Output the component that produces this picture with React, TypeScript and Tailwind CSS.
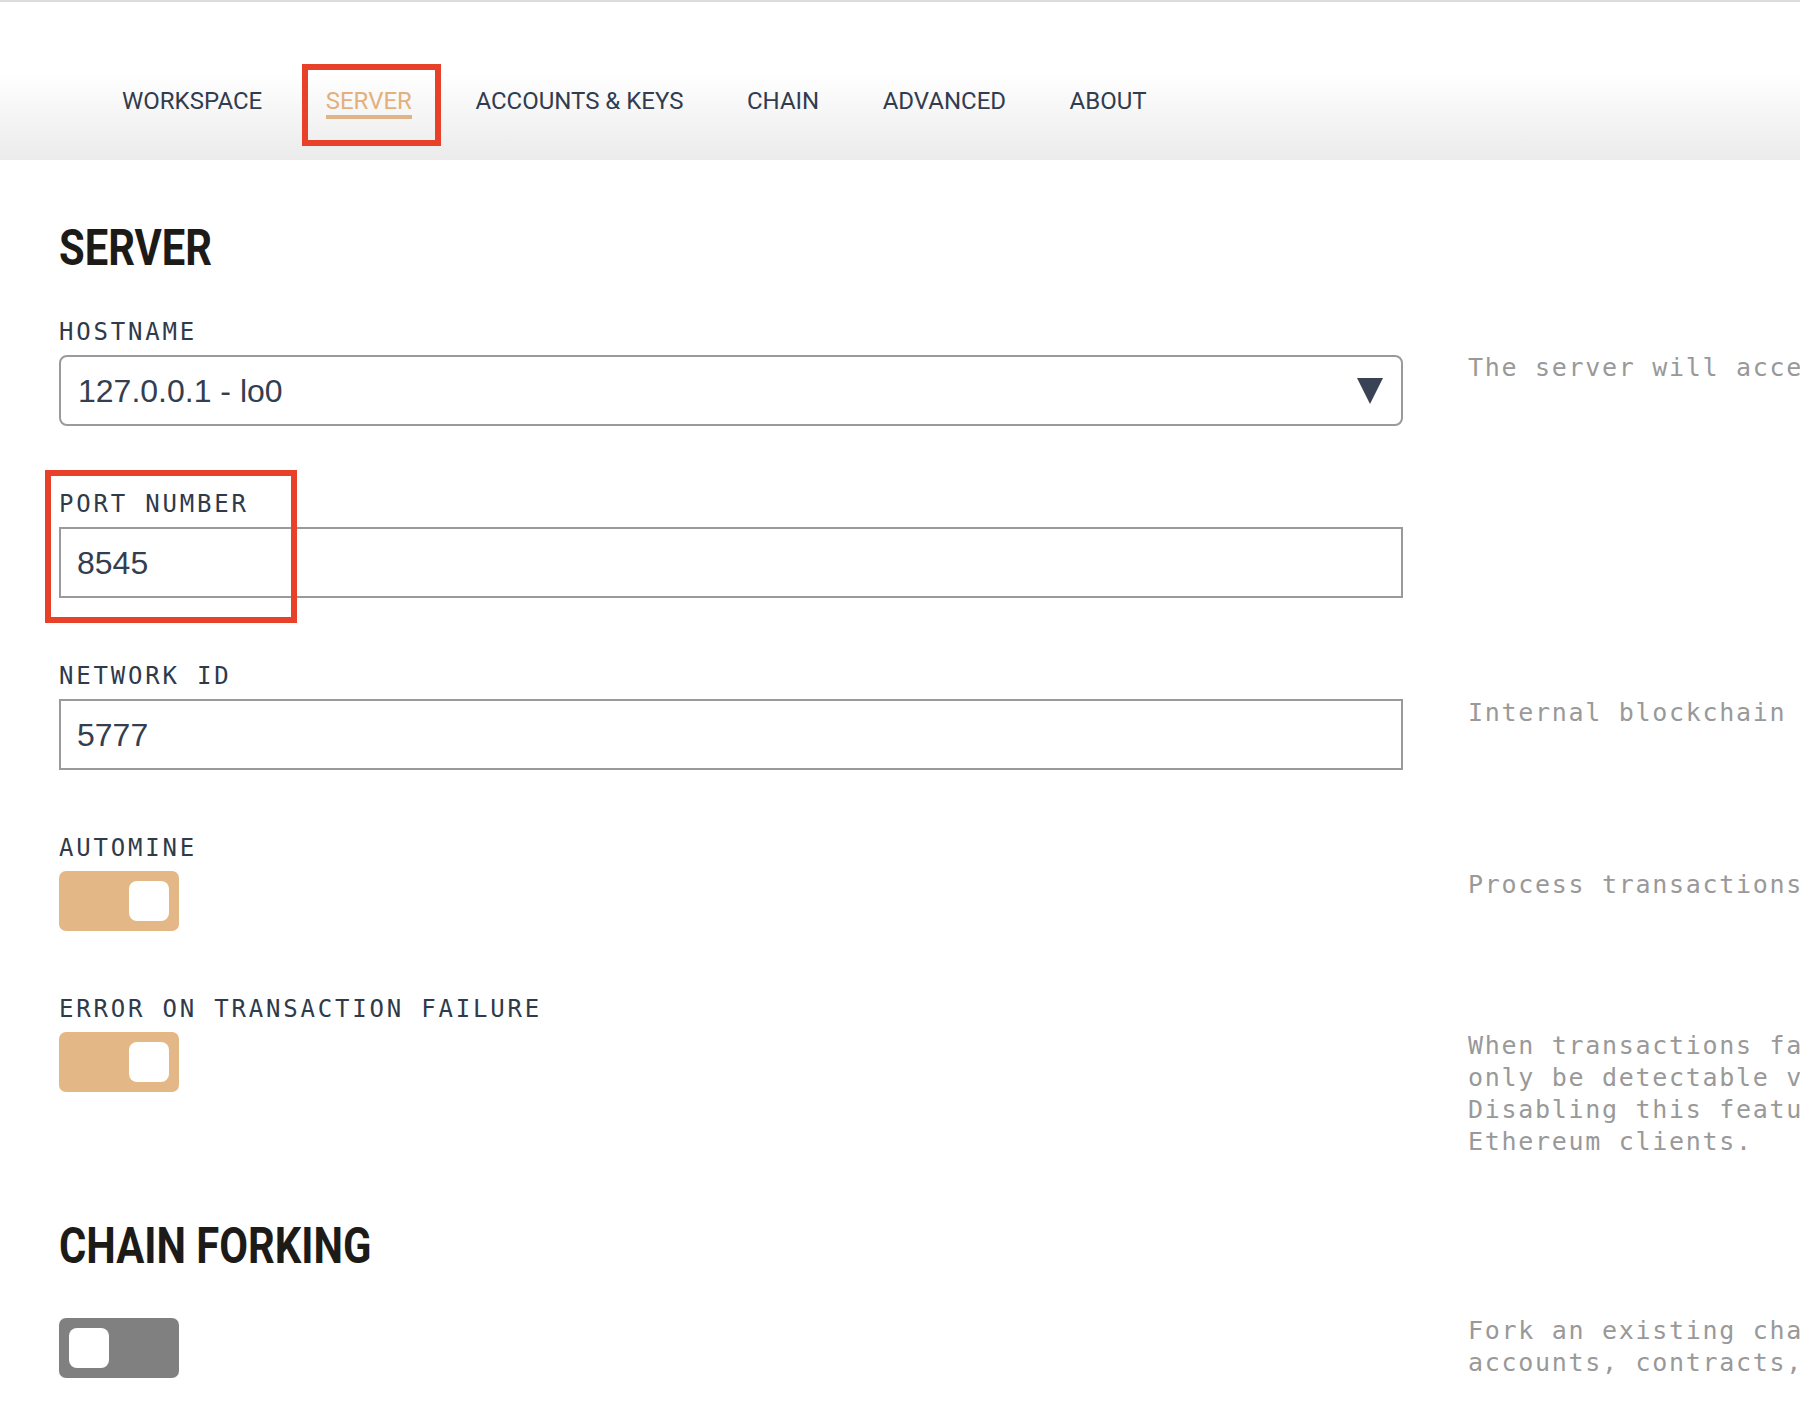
import React from 'react';

const tabs = ['WORKSPACE', 'SERVER', 'ACCOUNTS & KEYS', 'CHAIN', 'ADVANCED', 'ABOUT'];

const Toggle = ({ on }: { on: boolean }) => (
  <div
    className={
      on
        ? 'w-[120px] h-[60px] rounded-[7px] bg-[#e3b786] p-[10px] flex justify-end'
        : 'w-[120px] h-[60px] rounded-[7px] bg-[#808080] p-[10px] flex justify-start'
    }
  >
    <div className="w-[40px] h-[40px] rounded-[8px] bg-white" />
  </div>
);

const Label = ({ children }: { children: React.ReactNode }) => (
  <div className="font-['DejaVu_Sans_Mono',monospace] text-[24px] leading-[28px] tracking-[2.8px] text-[#2f3a4b] whitespace-nowrap">
    {children}
  </div>
);

const Desc = ({ lines, className }: { lines: string[]; className?: string }) => (
  <div className={'font-[\'DejaVu_Sans_Mono\',monospace] text-[25px] leading-[32px] tracking-[1.7px] text-[#999999] whitespace-nowrap ' + (className ?? '')}>
    {lines.map((l) => (
      <div key={l}>{l}</div>
    ))}
  </div>
);

const Heading = ({ children }: { children: React.ReactNode }) => (
  <h2 className="font-['Roboto',sans-serif] font-bold text-[50px] leading-[50px] text-[#1d1b18] origin-left scale-x-[0.835] whitespace-nowrap">
    {children}
  </h2>
);

export default function App() {
  return (
    <div className="w-[1800px] min-h-[1404px] bg-white overflow-hidden font-['Roboto',sans-serif]">
      {/* Top tabs */}
      <header className="h-[160px] border-t-2 border-[#dcdcdc] bg-linear-to-b from-white from-45% to-[#ebebeb] flex items-start gap-[63.5px] pl-[122px] pt-[85px]">
        {tabs.map((t) =>
          t === 'SERVER' ? (
            <div key={t} className="relative flex flex-col">
              <span className="text-[24px] leading-[28px] text-[#e3b07c]">{t}</span>
              <span className="h-[4px] bg-[#dfb487]" />
              <div className="absolute -left-[24px] -top-[23px] -right-[29px] -bottom-[27px] border-[6px] border-[#e8412a]" />
            </div>
          ) : (
            <span key={t} className="text-[24px] leading-[28px] text-[#313c4e] whitespace-nowrap">
              {t}
            </span>
          )
        )}
      </header>

      <main className="pl-[59px] pt-[63px]">
        <Heading>SERVER</Heading>

        <div className="mt-[45px] grid grid-cols-[1344px_1fr] gap-x-[65px] gap-y-[64px]">
          {/* Hostname */}
          <div>
            <Label>HOSTNAME</Label>
            <div className="mt-[9px] h-[71px] rounded-[8px] border-2 border-[#9a9a9a] flex items-center justify-between pl-[17px] pr-[18px]">
              <span className="font-['Liberation_Sans',Arial,sans-serif] text-[32px] text-[#333e50]">127.0.0.1 - lo0</span>
              <svg width="26" height="26" viewBox="0 0 26 26">
                <path d="M0 0 H26 L13 26 Z" fill="#3a4356" />
              </svg>
            </div>
          </div>
          <Desc className="pt-[34px]" lines={['The server will accept RPC connections on the following host and port.']} />

          {/* Port */}
          <div className="relative">
            <Label>PORT NUMBER</Label>
            <div className="mt-[9px] h-[71px] border-2 border-[#9a9a9a] flex items-center pl-[16px]">
              <span className="font-['Liberation_Sans',Arial,sans-serif] text-[32px] text-[#333e50]">8545</span>
            </div>
            <div className="absolute -left-[14px] -top-[20px] w-[252px] h-[153px] border-[6px] border-[#e8412a]" />
          </div>
          <div />

          {/* Network */}
          <div>
            <Label>NETWORK ID</Label>
            <div className="mt-[9px] h-[71px] border-2 border-[#9a9a9a] flex items-center pl-[16px]">
              <span className="font-['Liberation_Sans',Arial,sans-serif] text-[32px] text-[#333e50]">5777</span>
            </div>
          </div>
          <Desc className="pt-[35px]" lines={['Internal blockchain identifier of Ganache server.']} />

          {/* Automine */}
          <div>
            <Label>AUTOMINE</Label>
            <div className="mt-[9px]">
              <Toggle on />
            </div>
          </div>
          <Desc className="pt-[35px]" lines={['Process transactions instantaneously.']} />

          {/* Error on transaction failure */}
          <div>
            <Label>ERROR ON TRANSACTION FAILURE</Label>
            <div className="mt-[9px]">
              <Toggle on />
            </div>
          </div>
          <Desc
            className="pt-[35px]"
            lines={[
              'When transactions fail, throw an error. If disabled, transaction failures will',
              'only be detectable via the "status" flag in the transaction receipt.',
              'Disabling this feature will make Ganache handle transaction failures like other',
              'Ethereum clients.',
            ]}
          />
        </div>

        <div className="mt-[63px]">
          <Heading>CHAIN FORKING</Heading>
        </div>

        <div className="mt-[44px] grid grid-cols-[1344px_1fr] gap-x-[65px]">
          <div className="pt-[3px]">
            <Toggle on={false} />
          </div>
          <Desc
            lines={[
              "Fork an existing chain creating a new sandbox with the existing chain's",
              'accounts, contracts, transactions and data.',
            ]}
          />
        </div>
      </main>
    </div>
  );
}
